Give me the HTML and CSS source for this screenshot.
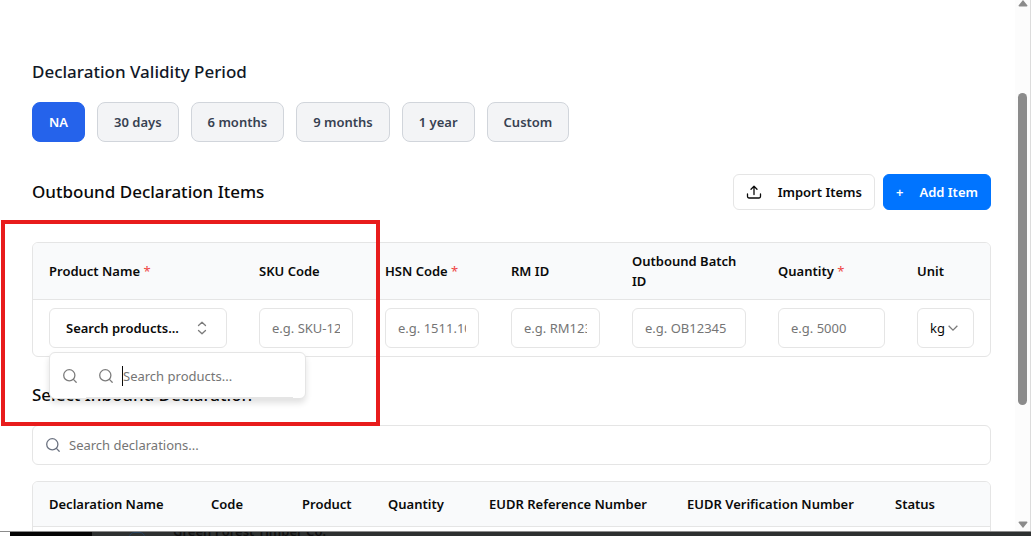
FILE: index.html
```html
<!DOCTYPE html>
<html lang="en">
<head>
<meta charset="utf-8">
<meta name="viewport" content="width=device-width, initial-scale=1">
<title>Outbound Declaration</title>
<link rel="stylesheet" href="styles.css">
</head>
<body>
<div class="window">
  <div class="viewport">
    <main class="content">
      <section class="section">
        <h2 class="heading heading-slate">Declaration Validity Period</h2>
        <div class="periods">
          <button class="period period-active" type="button">NA</button>
          <button class="period" type="button">30 days</button>
          <button class="period" type="button">6 months</button>
          <button class="period" type="button">9 months</button>
          <button class="period" type="button">1 year</button>
          <button class="period" type="button">Custom</button>
        </div>
      </section>

      <section class="items">
        <div class="items-head">
          <h2 class="heading">Outbound Declaration Items</h2>
          <div class="actions">
            <button class="action" type="button">
              <svg class="icon" viewBox="0 0 16 16" aria-hidden="true"><path d="M8 10.500V2.500M5 5.300L8 2.300l3 3M1.500 10v2.600c0 .9.6 1.400 1.400 1.400h10.200c.8 0 1.400-.5 1.400-1.400V10"/></svg>
              <span>Import Items</span>
            </button>
            <button class="action action-primary" type="button"><span class="plus">+</span><span>Add Item</span></button>
          </div>
        </div>
        <div class="items-box">
          <div class="table-box">
            <table class="table items-table">
              <colgroup><col class="c-name"><col class="c-sku"><col class="c-hsn"><col class="c-rm"><col class="c-batch"><col class="c-qty"><col class="c-unit"></colgroup>
              <thead>
                <tr>
                  <th>Product Name <span class="required">*</span></th>
                  <th>SKU Code</th>
                  <th>HSN Code <span class="required">*</span></th>
                  <th>RM ID</th>
                  <th>Outbound Batch ID</th>
                  <th>Quantity <span class="required">*</span></th>
                  <th>Unit</th>
                </tr>
              </thead>
              <tbody>
                <tr>
                  <td>
                    <button class="field combo" type="button" aria-expanded="true">
                      <span>Search products...</span>
                      <svg class="icon icon-muted" viewBox="0 0 16 16" aria-hidden="true"><path d="M4.500 5.500L8 2.200 11.500 5.500M4.500 10.500L8 13.800 11.500 10.500"/></svg>
                    </button>
                  </td>
                  <td><input class="field" type="text" aria-label="SKU Code" placeholder="e.g. SKU-12345"></td>
                  <td><input class="field" type="text" aria-label="HSN Code" placeholder="e.g. 1511.10.00"></td>
                  <td><input class="field" type="text" aria-label="RM ID" placeholder="e.g. RM12345"></td>
                  <td><input class="field" type="text" aria-label="Outbound Batch ID" placeholder="e.g. OB12345"></td>
                  <td><input class="field" type="text" aria-label="Quantity" placeholder="e.g. 5000"></td>
                  <td>
                    <div class="unit">
                      <select class="field unit-select" aria-label="Unit"><option>kg</option></select>
                      <svg class="unit-chevron" viewBox="0 0 16 16" aria-hidden="true"><path d="M3 5.500L8 10.500 13 5.500"/></svg>
                    </div>
                  </td>
                </tr>
              </tbody>
            </table>
          </div>
          <div class="popover">
            <svg class="icon icon-muted" viewBox="0 0 16 16" aria-hidden="true"><circle cx="7.300" cy="7.300" r="5.600"/><path d="M11.400 11.400L14.200 14.200"/></svg>
            <div class="popover-search">
              <svg class="icon icon-muted" viewBox="0 0 16 16" aria-hidden="true"><circle cx="7.300" cy="7.300" r="5.600"/><path d="M11.400 11.400L14.200 14.200"/></svg>
              <input class="popover-input" type="text" aria-label="Search products" placeholder="Search products...">
            </div>
          </div>
        </div>
      </section>

      <section class="section">
        <h2 class="heading">Select Inbound Declaration</h2>
        <label class="search">
          <svg class="icon icon-slate" viewBox="0 0 16 16" aria-hidden="true"><circle cx="7.300" cy="7.300" r="5.600"/><path d="M11.400 11.400L14.200 14.200"/></svg>
          <input class="search-input" type="text" aria-label="Search declarations" placeholder="Search declarations...">
        </label>
        <div class="table-box">
          <table class="table inbound-table">
            <colgroup><col class="d-name"><col class="d-code"><col class="d-product"><col class="d-qty"><col class="d-ref"><col class="d-ver"><col class="d-status"></colgroup>
            <thead>
              <tr>
                <th>Declaration Name</th>
                <th>Code</th>
                <th>Product</th>
                <th>Quantity</th>
                <th>EUDR Reference Number</th>
                <th>EUDR Verification Number</th>
                <th>Status</th>
              </tr>
            </thead>
            <tbody><tr><td colspan="7"></td></tr></tbody>
          </table>
        </div>
      </section>
    </main>
    <div class="scrollbar" aria-hidden="true">
      <svg class="arrow" viewBox="0 0 10 7"><path d="M5 0L9.500 5.500Q9.500 6.500 8.500 6.500H1.500Q.5 6.500 .5 5.500Z"/></svg>
      <div class="track"><div class="before"></div><div class="thumb"></div><div class="after"></div></div>
      <svg class="arrow arrow-down" viewBox="0 0 10 7"><path d="M5 7L9.500 1.500Q9.500 .5 8.500 .5H1.500Q.5 .5 .5 1.500Z"/></svg>
    </div>
  </div>
  <div class="backdrop">
    <div class="backdrop-dark"></div>
    <span class="backdrop-ring"></span>
    <span class="backdrop-text">Green Forest Timber Co.</span>
  </div>
</div>
<div class="highlight"></div>
</body>
</html>
```
FILE: styles.css
```css
* { box-sizing: border-box; }

body {
  margin: 0;
  background: #fff;
  color: #0a0a0a;
  font: 400 13px/20px "Segoe UI", "Noto Sans", "Open Sans", sans-serif;
}

button, input, select { font: inherit; color: inherit; }
input::placeholder { color: #757575; opacity: 1; }

.window { display: flex; flex-direction: column; height: 100vh; overflow: hidden; }
.viewport { display: flex; flex: 1; min-height: 0; border-bottom: 1px solid #8c8c8c; }
.content {
  display: flex;
  flex: 1;
  flex-direction: column;
  gap: 24px;
  min-width: 0;
  padding: 58px 24px 0 32px;
  overflow: hidden;
}

.section { display: flex; flex-direction: column; gap: 16px; }
.heading { margin: 0; font-size: 17px; line-height: 28px; font-weight: 500; }
.heading-slate { color: #111827; }

.periods { display: flex; gap: 12px; }
.period {
  height: 40px;
  padding: 0 16px;
  border: 1px solid #d1d5db;
  border-radius: 8px;
  background: #f3f4f6;
  color: #374151;
  font-weight: 600;
}
.period-active { border-color: #2563eb; background: #2563eb; color: #fff; }

.items { display: flex; flex-direction: column; gap: 32px; margin-top: 8px; }
.items-head { display: flex; align-items: center; justify-content: space-between; }
.actions { display: flex; gap: 8px; }
.action {
  display: flex;
  align-items: center;
  gap: 16px;
  height: 36px;
  padding: 0 12px;
  border: 1px solid #e5e5e5;
  border-radius: 6px;
  background: #fff;
  font-weight: 600;
}
.action-primary { border-color: #0074ff; background: #0074ff; color: #fff; }

.icon {
  flex: none;
  width: 16px;
  height: 16px;
  fill: none;
  stroke: currentColor;
  stroke-width: 1.3;
  stroke-linecap: round;
  stroke-linejoin: round;
}
.icon-muted { color: #7c7c7c; }
.icon-slate { color: #6b7280; }

.items-box { position: relative; }
.table-box { overflow: hidden; border: 1px solid #e5e5e5; border-radius: 6px; }
.table { width: 100%; border-collapse: separate; border-spacing: 0; table-layout: fixed; }
.table th {
  padding: 0 16px;
  border-bottom: 1px solid #e5e5e5;
  background: #f9fafb;
  font-weight: 600;
  text-align: left;
}
.items-table th { height: 57px; }
.items-table td { padding: 8px 16px; }
.inbound-table th { height: 45px; white-space: nowrap; }
.inbound-table td { height: 48px; }
.table .required { color: #ef4444; font-weight: 400; }

.c-name { width: 210px; }
.c-sku, .c-hsn { width: 126px; }
.c-rm { width: 121px; }
.c-batch { width: 146px; }
.c-qty { width: 139px; }
.c-unit { width: 89px; }

.d-name { width: 162px; }
.d-code { width: 91px; }
.d-product { width: 86px; }
.d-qty { width: 101px; }
.d-ref { width: 198px; }
.d-ver { width: 208px; }
.d-status { width: 111px; }

.field {
  display: block;
  width: 100%;
  height: 40px;
  padding: 0 12px;
  border: 1px solid #e5e5e5;
  border-radius: 6px;
  background: #fff;
}
.combo { display: flex; align-items: center; justify-content: space-between; padding: 0 16px; font-weight: 600; }
.unit { position: relative; }
.unit-select { appearance: none; }
.unit-chevron {
  position: absolute;
  top: 13px;
  right: 14px;
  width: 14px;
  height: 14px;
  fill: none;
  stroke: #7c7c7c;
  stroke-width: 1.5;
  pointer-events: none;
}

.popover {
  position: absolute;
  top: 110px;
  left: 17px;
  z-index: 2;
  display: flex;
  align-items: stretch;
  width: 257px;
  height: 47px;
  padding: 0 12px;
  border: 1px solid #e5e5e5;
  border-radius: 6px;
  background: #fff;
  box-shadow: 0 4px 6px rgba(0, 0, 0, 0.12);
}
.popover > .icon { align-self: center; }
.popover-search {
  display: flex;
  flex: 1;
  align-items: center;
  gap: 8px;
  min-width: 0;
  margin-left: 8px;
  padding-top: 2px;
  padding-left: 12px;
  border-bottom: 1px solid #e5e5e5;
}
.popover-input, .search-input { flex: 1; min-width: 0; padding: 0; border: 0; outline: 0; background: none; }
.popover-input { height: 20px; border-left: 1px solid #0a0a0a; }

.search {
  display: flex;
  align-items: center;
  gap: 8px;
  height: 40px;
  padding: 0 12px;
  border: 1px solid #e5e5e5;
  border-radius: 6px;
}

.scrollbar {
  display: flex;
  flex-direction: column;
  align-items: center;
  width: 16px;
  border-right: 1px solid #dcdcdc;
  background: #fcfcfc;
}
.arrow { flex: none; width: 10px; height: 7px; fill: #8b8b8b; }
.arrow-down { margin-bottom: 3px; }
.track { display: flex; flex: 1; flex-direction: column; width: 9px; }
.before { flex: 86; }
.thumb { flex: 312; border-radius: 5px; background: #8b8b8b; }
.after { flex: 116; }

.backdrop {
  display: flex;
  flex: none;
  align-items: flex-start;
  height: 4px;
  margin-left: 10px;
  overflow: hidden;
  background: #2d3030;
}
.backdrop-dark { width: 82px; height: 4px; background: #050505; }
.backdrop-ring { width: 16px; height: 16px; margin: 0 28px 0 37px; border: 1px solid #26405c; border-radius: 5px; }
.backdrop-text { margin-top: -11px; color: #111; font-weight: 600; white-space: nowrap; }

.highlight {
  position: absolute;
  top: 220px;
  left: 1px;
  z-index: 3;
  width: 379px;
  height: 206px;
  border: 4px solid #e81c1c;
  pointer-events: none;
}
```
